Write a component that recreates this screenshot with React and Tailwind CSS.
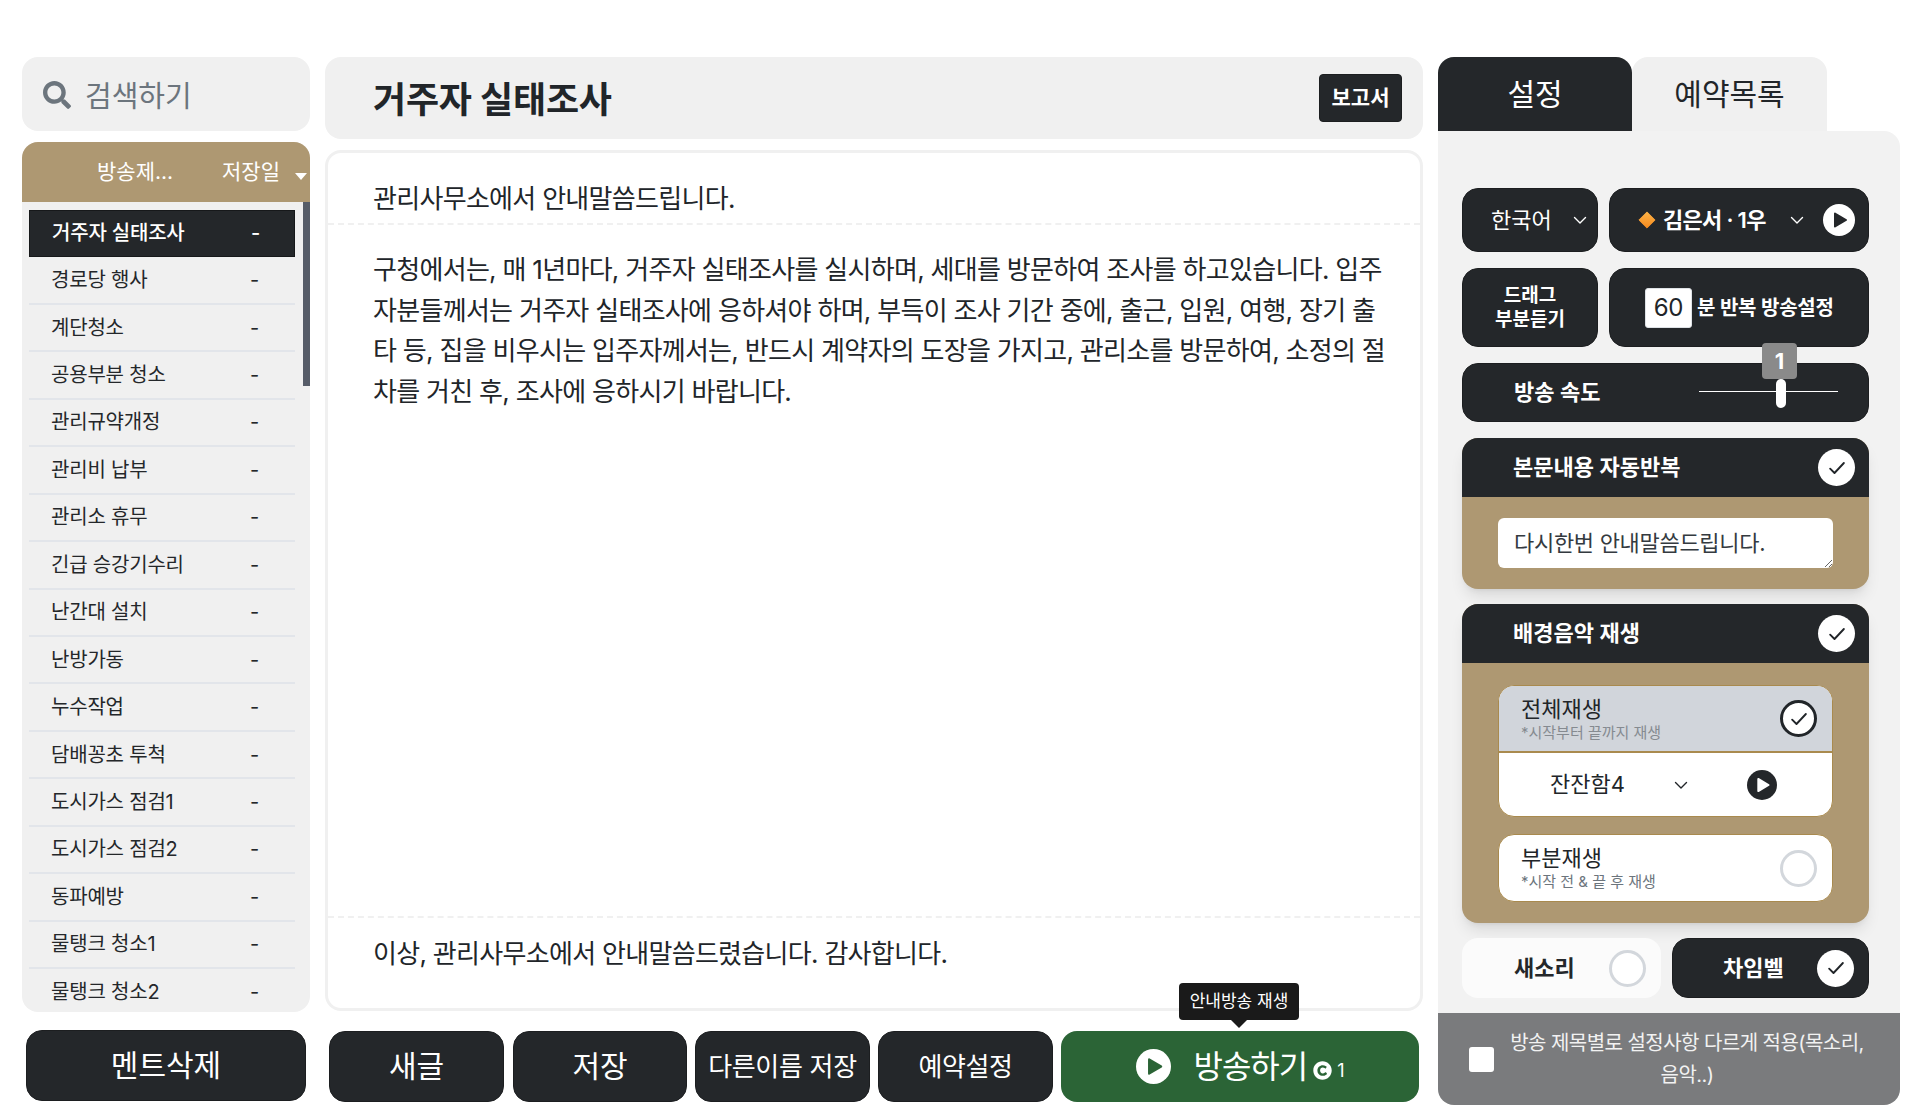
import React from 'react';
import { FaSearch, FaCopyright } from 'react-icons/fa';

const titles = [
  '거주자 실태조사', '경로당 행사', '계단청소', '공용부분 청소', '관리규약개정', '관리비 납부', '관리소 휴무', '긴급 승강기수리',
  '난간대 설치', '난방가동', '누수작업', '담배꽁초 투척', '도시가스 점검1', '도시가스 점검2', '동파예방', '물탱크 청소1', '물탱크 청소2',
];

const Chevron = ({ className = 'text-white' }) => (
  <svg viewBox="0 0 16 16" className={`w-[16px] h-[16px] ${className}`} fill="none" stroke="currentColor" strokeWidth="1.4" strokeLinecap="round" strokeLinejoin="round">
    <path d="M2.5 5.5 8 11l5.5-5.5" />
  </svg>
);

const PlayIcon = ({ size = 32, circle = '#ffffff', tri = '#24272a' }) => (
  <svg viewBox="0 0 32 32" width={size} height={size}>
    <circle cx="16" cy="16" r="16" fill={circle} />
    <path d="M12 9.5 23 16 12 22.5Z" fill={tri} stroke={tri} strokeWidth="2" strokeLinejoin="round" />
  </svg>
);

const CheckCircle = ({ dark }) => (
  <span className={`w-[37px] h-[37px] rounded-full bg-white flex items-center justify-center shrink-0 ${dark ? 'border-[3px] border-[#212529]' : ''}`}>
    <svg viewBox="0 0 16 16" className="w-[20px] h-[20px]" fill="none" stroke="#212529" strokeWidth="1.5" strokeLinecap="round" strokeLinejoin="round">
      <path d="M2.5 8.5 6 12l7.5-8" />
    </svg>
  </span>
);

const EmptyCircle = () => (
  <span className="w-[37px] h-[37px] rounded-full bg-white border-[3px] border-[#d3d7dc] shrink-0" />
);

const BottomButton = ({ children, className = '' }) => (
  <button className={`h-[71px] rounded-[16px] bg-[#24272a] border border-[#1c1e20] text-white flex items-center justify-center ${className}`}>
    {children}
  </button>
);

const SideList = () => (
  <div className="h-[870px] rounded-[16px] bg-[#f0f0f0] overflow-hidden flex flex-col">
    <div className="h-[60px] bg-[#ae9872] text-white text-[21px] flex items-center shrink-0 relative">
      <span className="ml-[75px] w-[125px]">방송제...</span>
      <span>저장일</span>
      <span className="absolute right-[3px] top-[31px] border-x-[6px] border-x-transparent border-t-[7px] border-t-white" />
    </div>
    <div className="flex-1 flex relative overflow-hidden">
      <div className="flex-1 pl-[7px] pr-[15px] pt-[8px]">
        {titles.map((t, i) => (
          <div
            key={t}
            className={`h-[47.44px] flex items-center pl-[22px] text-[20px] tracking-[-0.2px] ${i === 0 ? 'bg-[#24272a] border border-[#16181a] text-white font-medium pb-[2px]' : 'border-b-2 border-[#e2e5ea] text-[#24272a]'}`}
          >
            <span className="w-[199px]">{t}</span>
            <span>-</span>
          </div>
        ))}
      </div>
      <div className="absolute right-0 top-0 w-[7px] h-[184px] bg-[#565c68]" />
    </div>
  </div>
);

const Editor = () => (
  <div className="h-[861px] mt-[11px] border-[3px] border-[#f0f0f0] rounded-[16px] flex flex-col text-[26px] tracking-[-0.7px] text-[#212529]">
    <div className="h-[72px] flex items-end pl-[45px] pb-[5px] border-b-2 border-dashed border-[#f0f0f0]">관리사무소에서 안내말씀드립니다.</div>
    <div className="flex-1 pl-[45px] pr-[30px] pt-[25px] leading-[40.5px] break-all">
      구청에서는, 매 1년마다, 거주자 실태조사를 실시하며, 세대를 방문하여 조사를 하고있습니다. 입주자분들께서는 거주자 실태조사에 응하셔야 하며, 부득이 조사 기간 중에, 출근, 입원, 여행, 장기 출타 등, 집을 비우시는 입주자께서는, 반드시 계약자의 도장을 가지고, 관리소를 방문하여, 소정의 절차를 거친 후, 조사에 응하시기 바랍니다.
    </div>
    <div className="h-[92px] flex items-start pl-[45px] pt-[16px] border-t-2 border-dashed border-[#f0f0f0]">이상, 관리사무소에서 안내말씀드렸습니다. 감사합니다.</div>
  </div>
);

const darkBox = 'bg-[#24272a] border border-[#1c1e20] rounded-[16px] text-white';

const Settings = () => (
  <div className="flex-1 flex flex-col bg-[#f2f2f2] rounded-tr-[16px] rounded-b-[16px] overflow-hidden">
    <div className="flex-1 pl-[24px] pr-[31px] pt-[57px] flex flex-col">
      <div className="flex gap-[11px] h-[64px]">
        <div className={`${darkBox} w-[136px] flex items-center pl-[28px] text-[22px]`}>
          <span>한국어</span>
          <span className="ml-[20px]"><Chevron /></span>
        </div>
        <div className={`${darkBox} flex-1 flex items-center text-[22px] font-semibold pl-[28px]`}>
          <svg viewBox="0 0 20 20" className="w-[18px] h-[18px] mr-[7px]">
            <defs>
              <linearGradient id="dia" x1="0" y1="0" x2="0" y2="1">
                <stop offset="0" stopColor="#fdb347" />
                <stop offset="1" stopColor="#f58a1f" />
              </linearGradient>
            </defs>
            <path d="M10 1 19 10 10 19 1 10Z" fill="url(#dia)" stroke="url(#dia)" strokeLinejoin="round" />
          </svg>
          <span className="tracking-[-0.7px]">김은서 · 1우</span>
          <span className="ml-[23px] mr-[18px]"><Chevron /></span>
          <PlayIcon />
        </div>
      </div>
      <div className="flex gap-[11px] h-[79px] mt-[16px]">
        <div className={`${darkBox} w-[136px] flex items-center justify-center text-center text-[19px] leading-[24px] font-semibold`}>드래그<br />부분듣기</div>
        <div className={`${darkBox} flex-1 flex items-center pl-[35px] text-[20px] tracking-[-0.25px] font-semibold`}>
          <input readOnly value="60" className="w-[47px] h-[40px] bg-white rounded-[3px] text-center text-[#212529] text-[24px] font-normal border border-[#dee2e6]" />
          <span className="ml-[5px]">분 반복 방송설정</span>
        </div>
      </div>
      <div className={`${darkBox} h-[59px] mt-[16px] flex items-center pl-[51px] text-[22px] font-semibold relative`}>
        방송 속도
        <div className="absolute left-[236px] top-[27px] w-[139px] h-[1px] bg-white" />
        <div className="absolute left-[313px] top-[15px] w-[10px] h-[29px] rounded-full bg-white" />
        <div className="absolute left-[299px] top-[-21px] w-[35px] h-[36px] rounded-[4px] bg-[#8a8a8a] text-white text-[22px] font-bold flex items-center justify-center">1</div>
      </div>

      <div className="mt-[16px] rounded-[16px] bg-[#ae9872] shadow-lg overflow-hidden">
        <div className="h-[59px] bg-[#24272a] text-white text-[22px] font-semibold flex items-center justify-between pl-[51px] pr-[14px]">
          본문내용 자동반복
          <CheckCircle />
        </div>
        <div className="pt-[21px] pb-[21px] px-[36px]">
          <textarea readOnly defaultValue="다시한번 안내말씀드립니다." className="block w-full h-[50px] bg-white rounded-[6px] px-[16px] py-[9px] text-[22px] tracking-[-0.3px] text-[#343a40] outline-none" />
        </div>
      </div>

      <div className="mt-[15px] rounded-[16px] bg-[#ae9872] shadow-lg overflow-hidden">
        <div className="h-[59px] bg-[#24272a] text-white text-[22px] font-semibold flex items-center justify-between pl-[51px] pr-[14px]">
          배경음악 재생
          <CheckCircle />
        </div>
        <div className="px-[36px] pt-[22px] pb-[21px] flex flex-col gap-[17px]">
          <div className="rounded-[16px] border border-[#a98a4e] bg-white overflow-hidden">
            <div className="h-[67px] bg-[#d1d5db] border-b-2 border-[#a98a4e] flex items-center justify-between pl-[22px] pr-[15px]">
              <div>
                <div className="text-[22px] leading-[28px] text-[#212529]">전체재생</div>
                <div className="text-[15px] leading-[20px] text-[#858a90]">*시작부터 끝까지 재생</div>
              </div>
              <CheckCircle dark />
            </div>
            <div className="h-[63px] flex items-center">
              <span className="ml-[51px] text-[22px] text-[#212529]">잔잔함4</span>
              <span className="ml-[48px] mr-[58px]"><Chevron className="text-[#212529]" /></span>
              <PlayIcon circle="#24272a" tri="#ffffff" size={30} />
            </div>
          </div>
          <div className="h-[68px] rounded-[16px] border border-[#a98a4e] bg-white flex items-center justify-between pl-[22px] pr-[15px]">
            <div>
              <div className="text-[22px] leading-[28px] text-[#212529]">부분재생</div>
              <div className="text-[15px] leading-[20px] text-[#6c757d]">*시작 전 &amp; 끝 후 재생</div>
            </div>
            <EmptyCircle />
          </div>
        </div>
      </div>

      <div className="flex gap-[11px] h-[60px] mt-[15px]">
        <div className="w-[199px] rounded-[16px] bg-[#fbfbfb] flex items-center justify-between pl-[52px] pr-[15px] text-[22px] font-semibold text-[#24272a]">
          새소리
          <EmptyCircle />
        </div>
        <div className={`${darkBox} flex-1 flex items-center justify-between pl-[50px] pr-[14px] text-[22px] font-semibold`}>
          차임벨
          <CheckCircle />
        </div>
      </div>
    </div>
    <div className="h-[92px] mt-[15px] bg-[#7a7b7d] flex items-center pl-[31px] pr-[33px] text-[#f2f2f2] text-[20px] leading-[32px] tracking-[-0.55px]">
      <span className="w-[25px] h-[25px] rounded-[3px] bg-white shrink-0" />
      <span className="ml-[13px] flex-1 text-center">방송 제목별로 설정사항 다르게 적용(목소리, 음악..)</span>
    </div>
  </div>
);

const App = () => (
  <div className="w-[1920px] h-[1117px] bg-white overflow-hidden pt-[57px] pl-[22px] flex gap-[15px] font-['Inter','Noto_Sans_CJK_KR',sans-serif]">
    {/* left column */}
    <div className="w-[288px] flex flex-col">
      <div className="h-[74px] rounded-[16px] bg-[#f0f0f0] flex items-center pl-[21px] text-[#6c757d] text-[29px] shrink-0">
        <FaSearch className="w-[28px] h-[28px] mt-[2px]" />
        <span className="ml-[14px] mt-[5px]">검색하기</span>
      </div>
      <div className="mt-[11px]"><SideList /></div>
      <BottomButton className="mt-[18px] mx-[4px] text-[30px]">멘트삭제</BottomButton>
    </div>

    {/* center column */}
    <div className="w-[1098px] flex flex-col">
      <div className="h-[82px] rounded-[16px] bg-[#f0f0f0] flex items-center justify-between pl-[48px] pr-[21px] shrink-0">
        <h1 className="text-[36px] font-bold tracking-[-0.2px] text-[#212529] mt-[4px]">거주자 실태조사</h1>
        <button className="w-[83px] h-[48px] rounded-[4px] bg-[#24272a] border border-[#1c1e20] text-white text-[21px] font-semibold">보고서</button>
      </div>
      <Editor />
      <div className="flex mt-[20px] ml-[4px] gap-[8px] relative">
        <BottomButton className="w-[175px] text-[30px]">새글</BottomButton>
        <BottomButton className="w-[174px] ml-[1px] text-[30px]">저장</BottomButton>
        <BottomButton className="w-[175px] text-[26px] tracking-[-0.3px]">다른이름 저장</BottomButton>
        <BottomButton className="w-[175px] text-[26px] tracking-[-0.4px]">예약설정</BottomButton>
        <button className="w-[358px] h-[71px] rounded-[16px] bg-[#2b6436] text-white text-[32px] tracking-[-1px] flex items-center justify-center">
          <PlayIcon tri="#2b6436" size={35} />
          <span className="ml-[22px]">방송하기</span>
          <FaCopyright className="w-[19px] h-[19px] ml-[6px] mt-[8px]" />
          <span className="text-[18px] ml-[5px] mt-[8px]">1</span>
        </button>
        <div className="absolute left-[850px] top-[-48px] w-[120px] h-[37px] rounded-[4px] bg-[#1a1a1a] text-white text-[17px] flex items-center justify-center">
          안내방송 재생
          <span className="absolute left-[52px] top-[37px] border-x-[8px] border-x-transparent border-t-[8px] border-t-[#1a1a1a]" />
        </div>
      </div>
    </div>

    {/* right column */}
    <div className="w-[462px] h-[1048px] flex flex-col">
      <div className="flex h-[74px] shrink-0">
        <div className="w-[194px] rounded-t-[16px] bg-[#24272a] text-white text-[30px] flex items-center justify-center">설정</div>
        <div className="w-[195px] rounded-t-[16px] bg-[#f0f0f0] text-[#212529] text-[30px] flex items-center justify-center">예약목록</div>
      </div>
      <Settings />
    </div>
  </div>
);

export default App;
